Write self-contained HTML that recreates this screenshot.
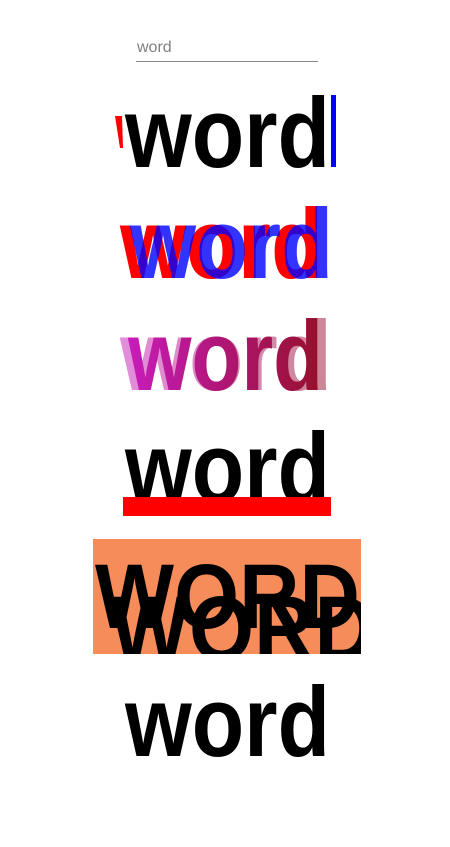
<!DOCTYPE html>
<html><head><meta charset="utf-8"><style>
html,body{margin:0;padding:0;background:#fff;width:450px;height:847px;overflow:hidden}
svg{display:block}
text{font-family:"Liberation Sans",Arial,sans-serif;font-weight:bold}
</style></head><body>
<svg width="450" height="847" viewBox="0 0 450 847" xmlns="http://www.w3.org/2000/svg">
<defs>
<linearGradient id="g" x1="0" x2="1"><stop offset="0" stop-color="#c81cbc"/><stop offset="1" stop-color="#96102a"/></linearGradient>
<clipPath id="c"><rect x="93" y="539" width="268" height="115"/></clipPath>
</defs>
<text x="137" y="52" style="font-weight:normal" font-size="16" fill="#808080">word</text>
<rect x="136" y="61" width="182" height="1" fill="#8a8a8a"/>

<polygon points="115,116 122,116 123,148 120,148" fill="#f00"/>
<text x="125" y="167" font-size="99" textLength="205" lengthAdjust="spacingAndGlyphs" fill="#000">word</text>
<rect x="331" y="95" width="5" height="72" fill="#00f"/>

<text x="120" y="278" font-size="99" textLength="203" lengthAdjust="spacingAndGlyphs" fill="#f00">word</text>
<text x="130" y="278" font-size="99" textLength="203" lengthAdjust="spacingAndGlyphs" fill="#00f" fill-opacity="0.8">word</text>

<text x="120" y="390" font-size="99" textLength="212" lengthAdjust="spacingAndGlyphs" fill="url(#g)" fill-opacity="0.5">word</text>
<text x="128" y="390" font-size="99" textLength="195" lengthAdjust="spacingAndGlyphs" fill="url(#g)">word</text>

<text x="125" y="502" font-size="99" textLength="205" lengthAdjust="spacingAndGlyphs" fill="#000">word</text>
<rect x="123" y="497" width="208" height="19" fill="#f00"/>

<rect x="93" y="539" width="268" height="115" fill="#f58c5a"/>
<g clip-path="url(#c)">
<text x="95" y="628" font-size="92" textLength="265" lengthAdjust="spacingAndGlyphs" fill="#000">WORD</text>
<text x="110" y="660" font-size="92" textLength="265" lengthAdjust="spacingAndGlyphs" fill="#000">WORD</text>
</g>

<text x="125" y="756" font-size="99" textLength="205" lengthAdjust="spacingAndGlyphs" fill="#000">word</text>
</svg>
</body></html>
